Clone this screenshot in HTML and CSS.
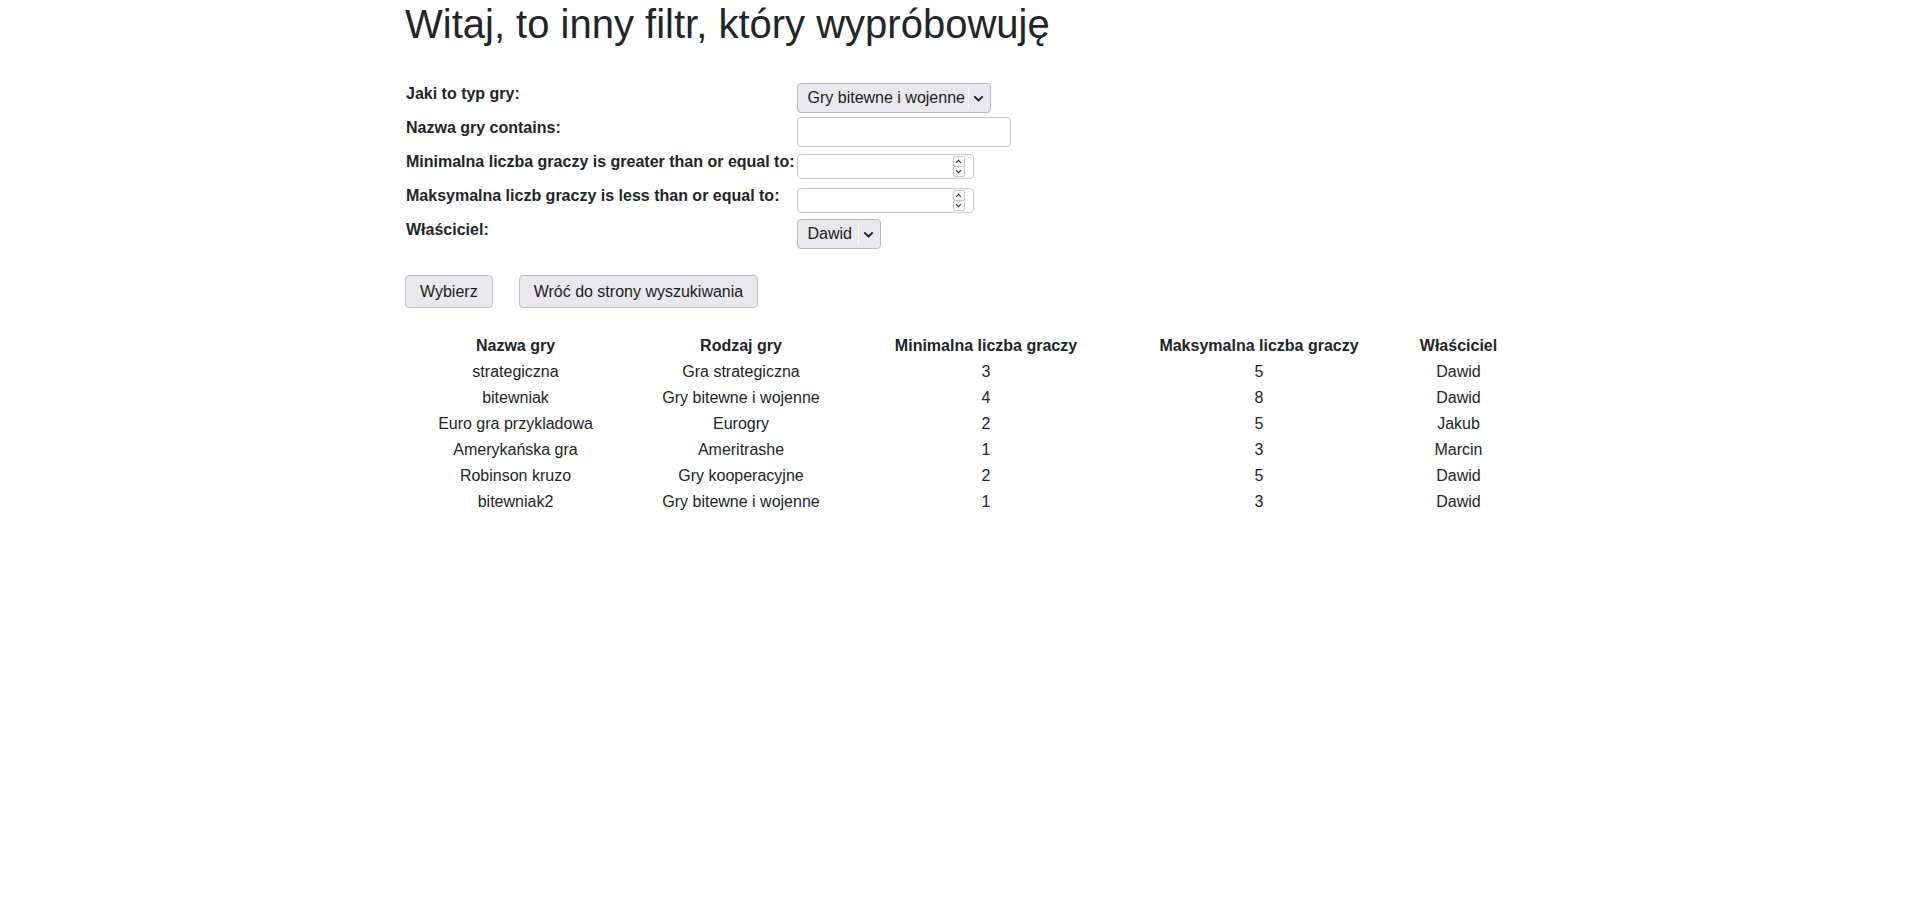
FILE: index.html
```html
<!DOCTYPE html>
<html lang="pl">
<head>
<meta charset="utf-8">
<title>Filtr gier</title>
<link rel="stylesheet" href="styles.css">
</head>
<body>
<div class="container">
  <h1 class="title">Witaj, to inny filtr, który wypróbowuję</h1>
  <form class="filter-form" method="get">
    <table class="form-table">
      <tr>
        <th><label for="typ">Jaki to typ gry:</label></th>
        <td>
          <span class="select-wrap select-wide">
            <select id="typ" class="select"><option>Gry bitewne i wojenne</option></select>
            <span class="select-sep"></span>
            <svg class="select-arrow" width="11" height="7" viewBox="0 0 11 7"><path d="M1.3 1.4 5.5 5.4 9.7 1.4" fill="none" stroke="#1b1b1b" stroke-width="1.9"/></svg>
          </span>
        </td>
      </tr>
      <tr>
        <th><label for="nazwa">Nazwa gry contains:</label></th>
        <td><input id="nazwa" class="text-input" type="text"></td>
      </tr>
      <tr>
        <th><label for="min">Minimalna liczba graczy is greater than or equal to:</label></th>
        <td>
          <span class="number-wrap">
            <input id="min" class="number-input" type="number">
            <span class="spinner">
              <span class="spin-btn"><svg width="7" height="5" viewBox="0 0 7 5"><path d="M1 3.8 3.5 1.3 6 3.8" fill="none" stroke="#333" stroke-width="1.1"/></svg></span>
              <span class="spin-btn"><svg width="7" height="5" viewBox="0 0 7 5"><path d="M1 1.2 3.5 3.7 6 1.2" fill="none" stroke="#333" stroke-width="1.1"/></svg></span>
            </span>
          </span>
        </td>
      </tr>
      <tr>
        <th><label for="max">Maksymalna liczb graczy is less than or equal to:</label></th>
        <td>
          <span class="number-wrap">
            <input id="max" class="number-input" type="number">
            <span class="spinner">
              <span class="spin-btn"><svg width="7" height="5" viewBox="0 0 7 5"><path d="M1 3.8 3.5 1.3 6 3.8" fill="none" stroke="#333" stroke-width="1.1"/></svg></span>
              <span class="spin-btn"><svg width="7" height="5" viewBox="0 0 7 5"><path d="M1 1.2 3.5 3.7 6 1.2" fill="none" stroke="#333" stroke-width="1.1"/></svg></span>
            </span>
          </span>
        </td>
      </tr>
      <tr>
        <th><label for="owner">Właściciel:</label></th>
        <td>
          <span class="select-wrap select-small">
            <select id="owner" class="select"><option>Dawid</option></select>
            <span class="select-sep"></span>
            <svg class="select-arrow" width="11" height="7" viewBox="0 0 11 7"><path d="M1.3 1.4 5.5 5.4 9.7 1.4" fill="none" stroke="#1b1b1b" stroke-width="1.9"/></svg>
          </span>
        </td>
      </tr>
    </table>
    <div class="actions">
      <button type="submit" class="btn">Wybierz</button>
      <button type="button" class="btn">Wróć do strony wyszukiwania</button>
    </div>
  </form>

  <table class="results">
    <colgroup>
      <col class="col-name">
      <col class="col-type">
      <col class="col-min">
      <col class="col-max">
      <col class="col-owner">
    </colgroup>
    <thead>
      <tr>
        <th>Nazwa gry</th>
        <th>Rodzaj gry</th>
        <th>Minimalna liczba graczy</th>
        <th>Maksymalna liczba graczy</th>
        <th>Właściciel</th>
      </tr>
    </thead>
    <tbody>
      <tr><td>strategiczna</td><td>Gra strategiczna</td><td>3</td><td>5</td><td>Dawid</td></tr>
      <tr><td>bitewniak</td><td>Gry bitewne i wojenne</td><td>4</td><td>8</td><td>Dawid</td></tr>
      <tr><td>Euro gra przykladowa</td><td>Eurogry</td><td>2</td><td>5</td><td>Jakub</td></tr>
      <tr><td>Amerykańska gra</td><td>Ameritrashe</td><td>1</td><td>3</td><td>Marcin</td></tr>
      <tr><td>Robinson kruzo</td><td>Gry kooperacyjne</td><td>2</td><td>5</td><td>Dawid</td></tr>
      <tr><td>bitewniak2</td><td>Gry bitewne i wojenne</td><td>1</td><td>3</td><td>Dawid</td></tr>
    </tbody>
  </table>
</div>
</body>
</html>
```

FILE: styles.css
```css
* {
  box-sizing: border-box;
}

html, body {
  margin: 0;
  padding: 0;
  background: #fff;
}

body {
  font-family: "Liberation Sans", Arial, sans-serif;
  font-size: 16px;
  line-height: 1.5;
  color: #212529;
}

.container {
  width: 1110px;
  margin: 0 auto;
}

.title {
  margin: 0 0 8px;
  font-size: 40px;
  font-weight: 400;
  line-height: 1.2;
}

.filter-form {
  margin: 33px 0 0;
}

.form-table {
  border-collapse: collapse;
}

.form-table th,
.form-table td {
  padding: 1px;
  vertical-align: middle;
}

.form-table th {
  text-align: left;
  font-weight: 700;
  white-space: nowrap;
}

.form-table label {
  display: block;
  margin-bottom: 8px;
}

/* select */
.select-wrap {
  position: relative;
  display: block;
  height: 30px;
}

.select-wide {
  width: 194px;
}

.select-small {
  width: 84px;
}

.select {
  -webkit-appearance: none;
  appearance: none;
  display: block;
  width: 100%;
  height: 30px;
  margin: 0;
  padding: 0 24px 0 10px;
  font: inherit;
  line-height: 28px;
  color: #1b1b1b;
  background: #e9e9ed;
  border: 1px solid #b9b9c0;
  border-radius: 4px;
  outline: none;
}

.select-sep {
  position: absolute;
  top: 4px;
  bottom: 4px;
  right: 22px;
  width: 1px;
  background: #fbfbfc;
}

.select-arrow {
  position: absolute;
  top: 12px;
  right: 7px;
  pointer-events: none;
}

/* text input */
.text-input {
  display: block;
  width: 214px;
  height: 30px;
  margin: 0;
  padding: 0 4px;
  font: inherit;
  color: #1b1b1b;
  background: #fff;
  border: 1px solid #c2c2c8;
  border-radius: 4px;
  outline: none;
}

/* number input */
.number-wrap {
  position: relative;
  display: block;
  width: 177px;
  height: 25px;
}

.number-input {
  -moz-appearance: textfield;
  appearance: textfield;
  display: block;
  width: 100%;
  height: 25px;
  margin: 0;
  padding: 0 28px 0 4px;
  font: inherit;
  font-size: 13px;
  color: #1b1b1b;
  background: #fff;
  border: 1px solid #c9c9ce;
  border-radius: 4px;
  outline: none;
}

.number-input::-webkit-inner-spin-button,
.number-input::-webkit-outer-spin-button {
  -webkit-appearance: none;
  margin: 0;
}

.spinner {
  position: absolute;
  top: 2px;
  bottom: 2px;
  right: 9px;
  width: 12px;
  display: flex;
  flex-direction: column;
}

.spin-btn {
  flex: 1;
  display: flex;
  align-items: center;
  justify-content: center;
  border: 1px solid #c4c4ca;
  border-radius: 2px;
  background: #fff;
}

.spin-btn + .spin-btn {
  margin-top: -1px;
}

/* buttons */
.actions {
  display: flex;
  gap: 26px;
  margin-top: 24px;
}

.btn {
  -webkit-appearance: none;
  appearance: none;
  height: 33px;
  margin: 0;
  padding: 0 14px;
  font: inherit;
  line-height: 31px;
  color: #1b1b1b;
  background: #e9e9ed;
  border: 1px solid #c0c0c6;
  border-radius: 4px;
  cursor: pointer;
}

/* results table */
.results {
  width: 100%;
  margin-top: 25px;
  border-collapse: collapse;
  table-layout: fixed;
}

.results th,
.results td {
  padding: 1px;
  text-align: center;
  white-space: nowrap;
}

.results th {
  font-weight: 700;
}

.col-name { width: 221px; }
.col-type { width: 230px; }
.col-min { width: 260px; }
.col-max { width: 286px; }
.col-owner { width: 113px; }
```
